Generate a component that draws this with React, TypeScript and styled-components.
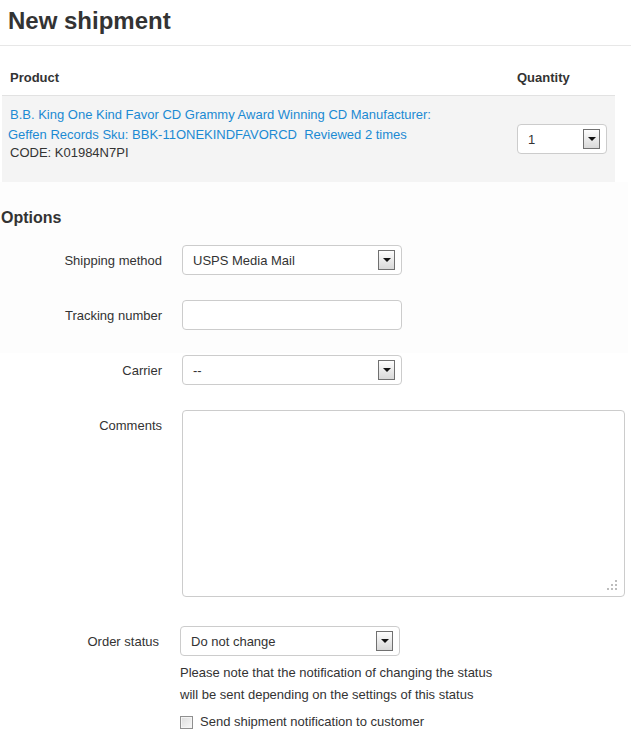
import React from "react";
import styled, { createGlobalStyle } from "styled-components";

const GlobalStyle = createGlobalStyle`
  html, body { margin: 0; padding: 0; background: #fff; }
  body {
    font-family: "Liberation Sans", Arial, Helvetica, sans-serif;
    font-size: 13px;
    color: #333;
  }
`;

const Page = styled.div`
  width: 631px;
  padding-bottom: 14px;
`;

const Title = styled.h1`
  margin: 0;
  padding: 7px 8px 10px 8px;
  font-size: 24px;
  line-height: 28px;
  font-weight: 700;
  color: #333;
  border-bottom: 1px solid #e7e7e7;
`;

const Table = styled.div`
  margin: 14px 16px 0 2px;
`;

const HeaderRow = styled.div`
  display: grid;
  grid-template-columns: 1fr 106px;
  height: 35px;
  align-items: center;
  border-bottom: 1px solid #e2e2e2;
`;

const HeaderCell = styled.div`
  padding: 0 8px;
  font-weight: 700;
  font-size: 13px;
  color: #333;
`;

const ProductRow = styled.div`
  display: grid;
  grid-template-columns: 1fr 106px;
  align-items: center;
  background: #f4f4f4;
`;

const ProductCell = styled.div`
  padding: 9px 8px 21px 6px;
`;

const ProductLink = styled.a`
  display: block;
  max-width: 440px;
  color: #1b8ad3;
  text-decoration: none;
  line-height: 20px;
  text-indent: 2px;
`;

const Code = styled.div`
  line-height: 16px;
  color: #333;
  padding-left: 2px;
`;

const QtyCell = styled.div`
  padding: 0 8px;
`;

const Options = styled.section`
  padding-top: 26px;
  background: linear-gradient(#fdfdfd, #fdfdfd) 0 0 / 628px 171px no-repeat;
`;

const OptionsTitle = styled.h2`
  margin: 0 0 17px 1px;
  font-size: 16px;
  line-height: 20px;
  font-weight: 700;
  color: #333;
`;

const FormRow = styled.div<{ $labelWidth?: number; $gap?: number; $mb?: number }>`
  display: grid;
  grid-template-columns: ${(p) => p.$labelWidth ?? 162}px 1fr;
  column-gap: ${(p) => p.$gap ?? 20}px;
  align-items: start;
  margin-bottom: ${(p) => p.$mb ?? 25}px;
`;

const Label = styled.label`
  text-align: right;
  padding-top: 1px;
  line-height: 29px;
  color: #333;
  white-space: nowrap;
`;

const Control = styled.div`
  display: flex;
  flex-direction: column;
  align-items: flex-start;
`;

const SelectBox = styled.div<{ $width: number }>`
  box-sizing: border-box;
  width: ${(p) => p.$width}px;
  height: 30px;
  border: 1px solid #ccc;
  border-radius: 4px;
  background: #fff;
  display: flex;
  align-items: center;
  justify-content: space-between;
  padding-left: 10px;
  padding-right: 6px;
  color: #333;
  font-size: 13px;
`;

const ArrowBox = styled.span`
  box-sizing: border-box;
  width: 17px;
  height: 20px;
  border: 1px solid #707070;
  background: linear-gradient(#fdfdfd, #d8d8d8);
  display: flex;
  align-items: center;
  justify-content: center;
  margin-top: -1px;

  &::after {
    content: "";
    width: 0;
    height: 0;
    border-left: 4px solid transparent;
    border-right: 4px solid transparent;
    border-top: 4px solid #111;
  }
`;

const TextInput = styled.input`
  box-sizing: border-box;
  width: 220px;
  height: 30px;
  border: 1px solid #ccc;
  border-radius: 4px;
  background: #fff;
  padding: 0 10px;
  font: inherit;
  outline: none;
`;

const AreaWrap = styled.div`
  position: relative;
  width: 443px;
  height: 187px;
`;

const TextArea = styled.textarea`
  box-sizing: border-box;
  width: 443px;
  height: 187px;
  border: 1px solid #ccc;
  border-radius: 4px;
  background: #fff;
  resize: none;
  display: block;
  font: inherit;
  outline: none;
`;

const Grip = styled.svg`
  position: absolute;
  right: 7px;
  bottom: 6px;
  width: 12px;
  height: 11px;
`;

const Note = styled.div`
  margin-top: 6px;
  line-height: 22px;
  color: #333;
`;

const CheckRow = styled.label`
  display: flex;
  align-items: center;
  gap: 7px;
  margin-top: 6px;
  line-height: 20px;
  color: #333;
`;

const Check = styled.span`
  box-sizing: border-box;
  width: 13px;
  height: 13px;
  border: 1px solid #8f8f8f;
  background: linear-gradient(135deg, #dcdcdc, #f8f8f8);
  box-shadow: inset 0 0 0 1px #f4f4f4;
`;

const Select: React.FC<{ value: string; width: number }> = ({ value, width }) => (
  <SelectBox $width={width}>
    <span>{value}</span>
    <ArrowBox />
  </SelectBox>
);

export default function App() {
  return (
    <Page>
      <GlobalStyle />
      <Title>New shipment</Title>
      <Table>
        <HeaderRow>
          <HeaderCell>Product</HeaderCell>
          <HeaderCell>Quantity</HeaderCell>
        </HeaderRow>
        <ProductRow>
          <ProductCell>
            <ProductLink href="#">
              B.B. King One Kind Favor CD Grammy Award Winning CD Manufacturer: Geffen Records Sku: BBK-11ONEKINDFAVORCD&nbsp; Reviewed 2 times
            </ProductLink>
            <Code>CODE: K01984N7PI</Code>
          </ProductCell>
          <QtyCell>
            <Select value="1" width={90} />
          </QtyCell>
        </ProductRow>
      </Table>

      <Options>
        <OptionsTitle>Options</OptionsTitle>
        <FormRow>
          <Label>Shipping method</Label>
          <Control>
            <Select value="USPS Media Mail" width={220} />
          </Control>
        </FormRow>
        <FormRow>
          <Label>Tracking number</Label>
          <Control>
            <TextInput type="text" />
          </Control>
        </FormRow>
        <FormRow>
          <Label>Carrier</Label>
          <Control>
            <Select value="--" width={220} />
          </Control>
        </FormRow>
        <FormRow $mb={29}>
          <Label>Comments</Label>
          <Control>
            <AreaWrap>
              <TextArea />
              <Grip viewBox="0 0 12 11">
                <rect x="9" y="0" width="2" height="2" fill="#bdbdbd" />
                <rect x="5" y="4" width="2" height="2" fill="#bdbdbd" />
                <rect x="9" y="4" width="2" height="2" fill="#bdbdbd" />
                <rect x="1" y="8" width="2" height="2" fill="#bdbdbd" />
                <rect x="5" y="8" width="2" height="2" fill="#bdbdbd" />
                <rect x="9" y="8" width="2" height="2" fill="#bdbdbd" />
              </Grip>
            </AreaWrap>
          </Control>
        </FormRow>
        <FormRow $labelWidth={159} $gap={21} $mb={0}>
          <Label>Order status</Label>
          <Control>
            <Select value="Do not change" width={220} />
            <Note>
              Please note that the notification of changing the status
              <br />
              will be sent depending on the settings of this status
            </Note>
            <CheckRow>
              <Check />
              Send shipment notification to customer
            </CheckRow>
          </Control>
        </FormRow>
      </Options>
    </Page>
  );
}
